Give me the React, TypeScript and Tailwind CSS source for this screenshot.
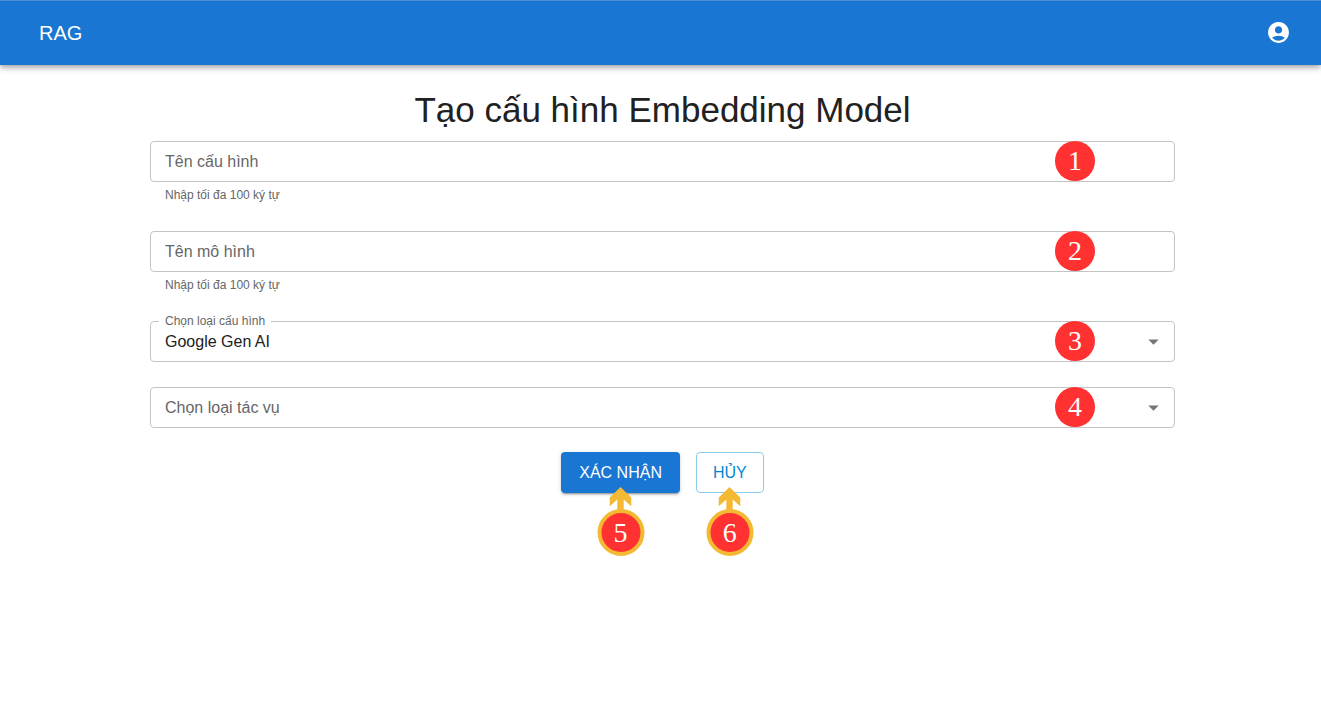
import { useState, type ReactNode } from "react";

function Marker({ n }: { n: number }) {
  return (
    <span className="pointer-events-none absolute right-20 top-0 flex size-10 items-center justify-center rounded-full bg-[#ff3131] font-['Liberation_Serif',serif] text-[28px] leading-none text-white">
      {n}
    </span>
  );
}

function FieldLabel({ id, floated, children }: { id: string; floated: boolean; children: ReactNode }) {
  return (
    <label
      htmlFor={id}
      className={`pointer-events-none absolute bg-white text-[#666666] ${
        floated ? "-top-2 left-[9px] px-1.5 text-[12px] leading-4" : "left-[15px] top-[9px] text-[16px] leading-6"
      }`}
    >
      {children}
    </label>
  );
}

const CONTROL =
  "block h-[41px] w-full rounded border border-[#c4c4c4] bg-white px-[14px] text-[16px] text-[#212121] outline-none hover:border-[#212121] focus:border-[#1976d2]";

function TextField({ id, label, helper, n }: { id: string; label: string; helper: string; n: number }) {
  const [value, setValue] = useState("");
  const [focused, setFocused] = useState(false);
  return (
    <div>
      <div className="relative">
        <input
          id={id}
          type="text"
          maxLength={100}
          value={value}
          aria-describedby={`${id}-helper`}
          onChange={(e) => setValue(e.target.value)}
          onFocus={() => setFocused(true)}
          onBlur={() => setFocused(false)}
          className={CONTROL}
        />
        <FieldLabel id={id} floated={focused || value !== ""}>
          {label}
        </FieldLabel>
        <Marker n={n} />
      </div>
      <p id={`${id}-helper`} className="mt-0.5 px-[15px] text-[12px] leading-[22px] text-[#666666]">
        {helper}
      </p>
    </div>
  );
}

function SelectField({
  id,
  label,
  options,
  initial,
  n,
}: {
  id: string;
  label: string;
  options: string[];
  initial: string;
  n: number;
}) {
  const [value, setValue] = useState(initial);
  return (
    <div className="relative">
      <select
        id={id}
        value={value}
        onChange={(e) => setValue(e.target.value)}
        className={`${CONTROL} appearance-none pr-10`}
      >
        {initial === "" && <option value="" />}
        {options.map((o) => (
          <option key={o}>{o}</option>
        ))}
      </select>
      <FieldLabel id={id} floated={value !== ""}>
        {label}
      </FieldLabel>
      <svg viewBox="0 0 24 24" className="pointer-events-none absolute right-[9px] top-2 size-[25px] fill-[#757575]" aria-hidden="true">
        <path d="M7 10l5 5 5-5z" />
      </svg>
      <Marker n={n} />
    </div>
  );
}

function Pointer({ n }: { n: number }) {
  return (
    <span className="pointer-events-none absolute left-1/2 top-[35px] flex -translate-x-1/2 flex-col items-center">
      <svg viewBox="0 0 22 24" className="h-6 w-[22px] fill-[#f4b932]" aria-hidden="true">
        <path d="M11 0L22 10.8V19.5L14.2 12.6V24H7.8V12.6L0 19.5V10.8z" />
      </svg>
      <span className="-mt-0.5 flex size-[47px] items-center justify-center rounded-full border-4 border-[#f4b932] bg-[#ff3131] font-['Liberation_Serif',serif] text-[28px] leading-none text-white">
        {n}
      </span>
    </span>
  );
}

export default function App() {
  return (
    <div className="min-h-screen bg-white font-['Liberation_Sans',Arial,sans-serif] text-[#212121]">
      <header className="flex h-[65px] items-center justify-between border-y border-t-[#4a90d9] border-b-[#1976d2] bg-[#1976d2] pl-[39px] pr-[30px] text-white shadow-[0_2px_4px_-1px_rgba(0,0,0,0.2),0_4px_5px_0_rgba(0,0,0,0.14),0_1px_10px_0_rgba(0,0,0,0.12)]">
        <a href="#" className="text-[20px] leading-8">
          RAG
        </a>
        <button type="button" aria-label="Tài khoản">
          <svg viewBox="0 0 24 24" className="size-[25px] fill-white" aria-hidden="true">
            <path d="M12 2C6.48 2 2 6.48 2 12s4.48 10 10 10 10-4.48 10-10S17.52 2 12 2m0 4c1.93 0 3.5 1.57 3.5 3.5S13.93 13 12 13s-3.5-1.57-3.5-3.5S10.07 6 12 6m0 14c-2.03 0-4.43-.82-6.14-2.88C7.55 15.8 9.68 15 12 15s4.45.8 6.14 2.12C16.43 19.18 14.03 20 12 20" />
          </svg>
        </button>
      </header>
      <main className="pl-1 pt-6">
        <form className="mx-auto w-full max-w-[1025px]" onSubmit={(e) => e.preventDefault()}>
          <h1 className="mb-2.5 text-center text-[35px] leading-[42px]">Tạo cấu hình Embedding Model</h1>
          <div className="flex flex-col gap-[25px]">
            <TextField id="config-name" label="Tên cấu hình" helper="Nhập tối đa 100 ký tự" n={1} />
            <TextField id="model-name" label="Tên mô hình" helper="Nhập tối đa 100 ký tự" n={2} />
            <SelectField
              id="config-type"
              label="Chọn loại cấu hình"
              options={["Google Gen AI"]}
              initial="Google Gen AI"
              n={3}
            />
            <SelectField id="task-type" label="Chọn loại tác vụ" options={["Embedding"]} initial="" n={4} />
          </div>
          <div className="mt-6 flex justify-center gap-4">
            <div className="relative">
              <button
                type="submit"
                className="h-[41px] rounded bg-[#1976d2] px-[18px] text-[16px] text-white shadow-[0_3px_1px_-2px_rgba(0,0,0,0.2),0_2px_2px_0_rgba(0,0,0,0.14),0_1px_5px_0_rgba(0,0,0,0.12)]"
              >
                XÁC NHẬN
              </button>
              <Pointer n={5} />
            </div>
            <div className="relative">
              <button
                type="button"
                className="h-[41px] rounded border border-[#8ccaeb] bg-white px-4 text-[16px] text-[#0288d1]"
              >
                HỦY
              </button>
              <Pointer n={6} />
            </div>
          </div>
        </form>
      </main>
    </div>
  );
}
